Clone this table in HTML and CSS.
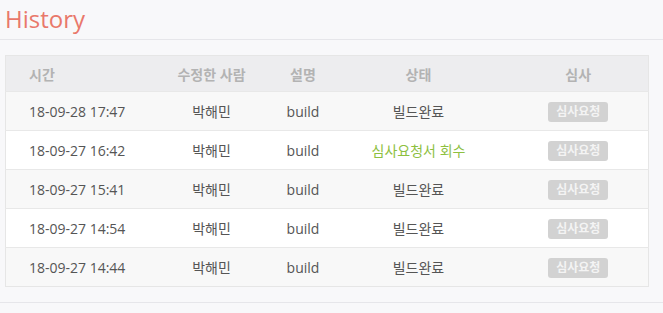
FILE: index.html
```html
<!DOCTYPE html>
<html lang="ko">
<head>
<meta charset="utf-8">
<link rel="stylesheet" href="styles.css">
</head>
<body>
<div class="page">
  <h1 class="title">History</h1>
  <div class="content">
    <table class="history">
      <colgroup>
        <col class="c-time"><col class="c-user"><col class="c-desc"><col class="c-state"><col class="c-review">
      </colgroup>
      <thead>
        <tr><th class="left">시간</th><th>수정한 사람</th><th>설명</th><th>상태</th><th>심사</th></tr>
      </thead>
      <tbody>
        <tr><td class="left">18-09-28 17:47</td><td>박해민</td><td>build</td><td>빌드완료</td><td><span class="badge">심사요청</span></td></tr>
        <tr><td class="left">18-09-27 16:42</td><td>박해민</td><td>build</td><td class="green">심사요청서 회수</td><td><span class="badge">심사요청</span></td></tr>
        <tr><td class="left">18-09-27 15:41</td><td>박해민</td><td>build</td><td>빌드완료</td><td><span class="badge">심사요청</span></td></tr>
        <tr><td class="left">18-09-27 14:54</td><td>박해민</td><td>build</td><td>빌드완료</td><td><span class="badge">심사요청</span></td></tr>
        <tr><td class="left">18-09-27 14:44</td><td>박해민</td><td>build</td><td>빌드완료</td><td><span class="badge">심사요청</span></td></tr>
      </tbody>
    </table>
  </div>
</div>
</body>
</html>
```
FILE: styles.css
```css
html, body {
  margin: 0;
  padding: 0;
  background: #f8f8fa;
}
body {
  font-family: "Open Sans", "Noto Sans CJK KR", sans-serif;
  color: #555;
}
.page {
  width: 663px;
}
.title {
  margin: 0;
  padding: 0 0 0 5px;
  height: 39px;
  line-height: 38px;
  font-size: 24px;
  font-weight: 400;
  color: #e9786b;
  border-bottom: 1px solid #e6e6ea;
}
.content {
  padding: 15px 0 15px 5px;
  border-bottom: 1px solid #e6e6ea;
}
.history {
  width: 643px;
  border-collapse: collapse;
  table-layout: fixed;
  border: 1px solid #e6e6e6;
  font-size: 14px;
}
.c-time { width: 140px; }
.c-user { width: 132px; }
.c-desc { width: 51px; }
.c-state { width: 180px; }
.c-review { width: 140px; }
.history th {
  height: 35px;
  padding: 0;
  background: #ededef;
  color: #b3b3b3;
  font-weight: 600;
  text-align: center;
}
.history td {
  height: 38px;
  padding: 0;
  text-align: center;
  border-top: 1px solid #e8e8e8;
  white-space: nowrap;
}
.history .left {
  text-align: left;
  padding-left: 23px;
}
.history tbody tr:nth-child(odd) td { background: #f8f8f8; }
.history tbody tr:nth-child(even) td { background: #ffffff; }
.green { color: #8dc03f; }
.badge {
  display: inline-block;
  width: 60px;
  height: 20px;
  line-height: 20px;
  border-radius: 3px;
  background: #d2d2d2;
  color: #f4f4f4;
  font-size: 12px;
  font-weight: 700;
  vertical-align: middle;
}
```
